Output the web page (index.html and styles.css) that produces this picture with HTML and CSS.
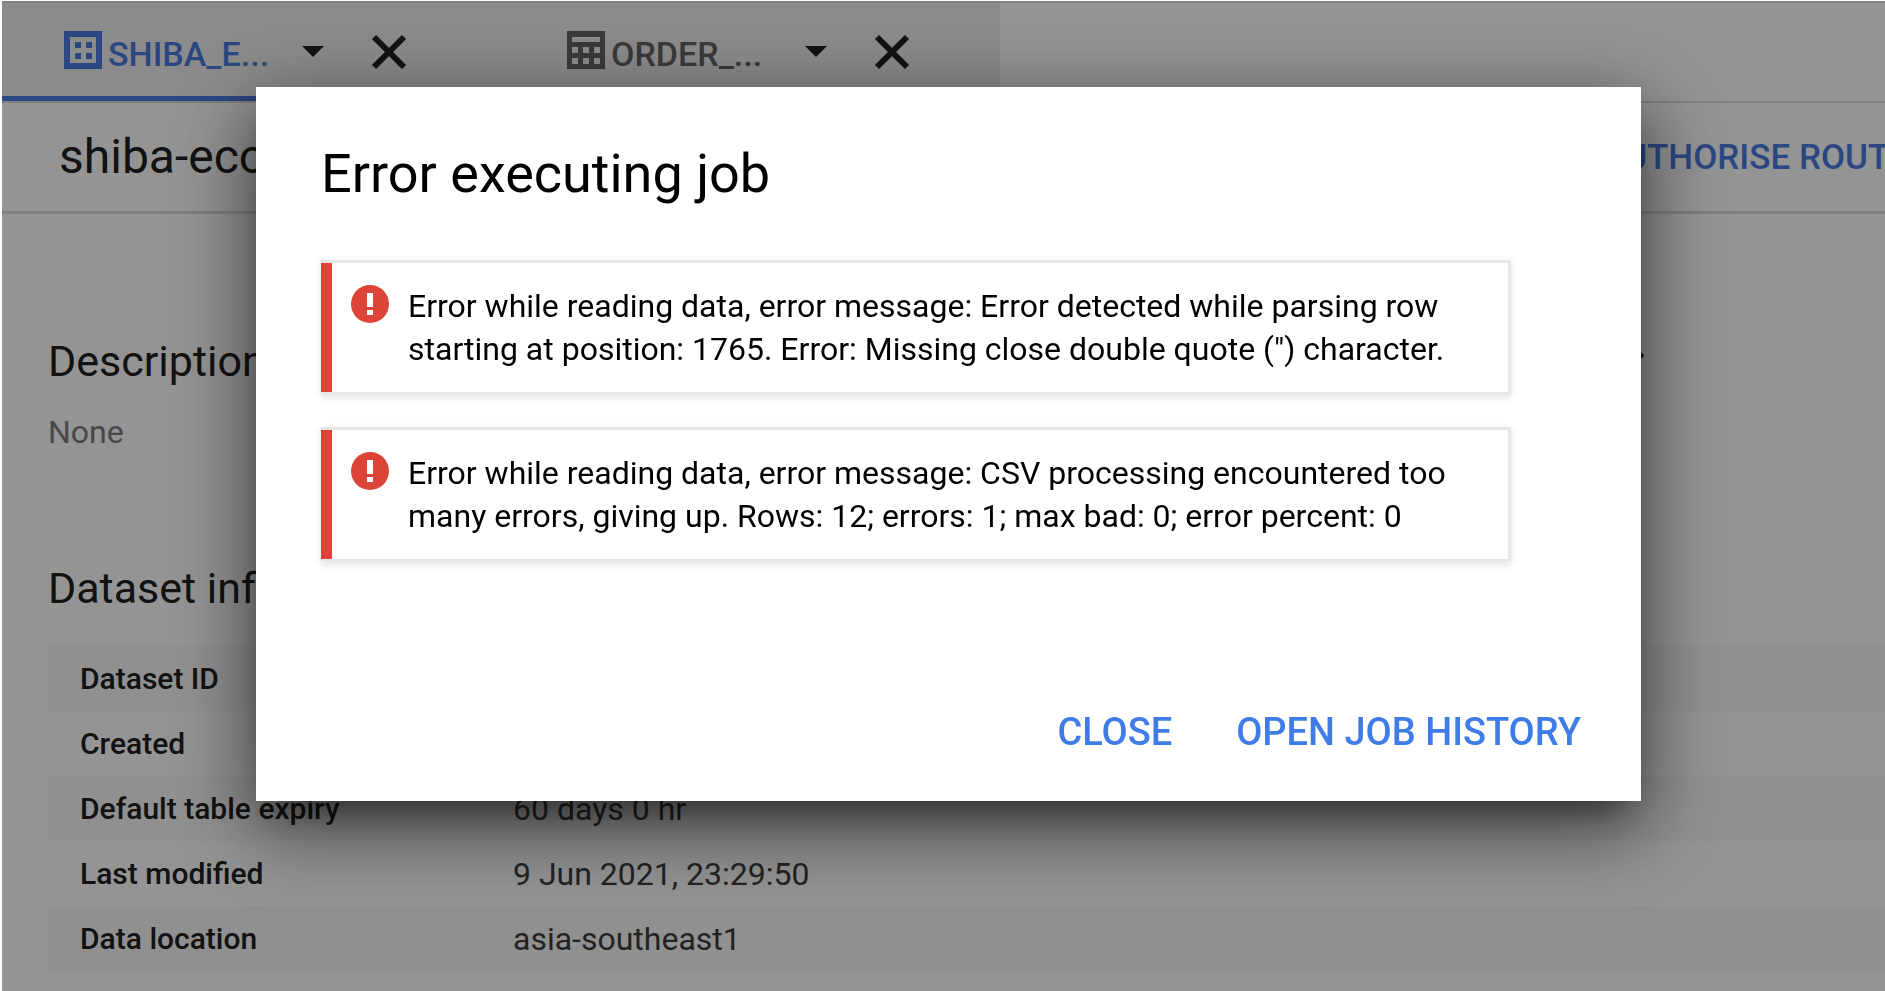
FILE: index.html
```html
<!DOCTYPE html>
<html lang="en-GB">
<head>
<meta charset="utf-8">
<title>Dataset details</title>
<link rel="stylesheet" href="styles.css">
</head>
<body>
<div class="page">
  <nav class="tabbar" aria-label="Open tabs">
    <div class="tabs">
      <div class="tab tab-active">
        <a class="tab-link" href="#dataset">
          <svg class="tab-icon" viewBox="0 0 38 38" aria-hidden="true"><path fill="currentColor" fill-rule="evenodd" d="M0 0h38v38H0zM6 6v26h26V6zM11 11h6v6h-6zM22 11h6v6h-6zM11 22h6v6h-6zM22 22h6v6h-6z"/></svg>
          <span class="tab-name">SHIBA_E...</span>
        </a>
        <button class="icon-button caret" aria-label="Tab menu"><svg width="22" height="11" viewBox="0 0 22 11"><path fill="currentColor" d="M0 0h22L11 11z"/></svg></button>
        <button class="icon-button" aria-label="Close tab"><svg width="36" height="36" viewBox="0 0 36 36"><path stroke="currentColor" stroke-width="6" d="M3 3l30 30M33 3L3 33"/></svg></button>
      </div>
      <div class="tab">
        <a class="tab-link" href="#table">
          <svg class="tab-icon" viewBox="0 0 38 38" aria-hidden="true"><path fill="currentColor" fill-rule="evenodd" d="M0 0h38v38H0zM5 6v5h28V6zM5 16v6h6v-6zM16 16v6h6v-6zM27 16v6h6v-6zM5 27v6h6v-6zM16 27v6h6v-6zM27 27v6h6v-6z"/></svg>
          <span class="tab-name">ORDER_...</span>
        </a>
        <button class="icon-button caret" aria-label="Tab menu"><svg width="22" height="11" viewBox="0 0 22 11"><path fill="currentColor" d="M0 0h22L11 11z"/></svg></button>
        <button class="icon-button" aria-label="Close tab"><svg width="36" height="36" viewBox="0 0 36 36"><path stroke="currentColor" stroke-width="6" d="M3 3l30 30M33 3L3 33"/></svg></button>
      </div>
    </div>
  </nav>
  <header class="header">
    <h1 class="project">shiba-eco</h1>
    <button class="action">AUTHORISE ROUTINES</button>
  </header>
  <main class="content">
    <div class="split">
      <section>
        <h2 class="heading">Description</h2>
        <p class="none">None</p>
      </section>
      <svg class="pencil" viewBox="0 0 36 36" aria-hidden="true"><path d="M0 28v8h8l21-21-8-8zM35 9c1-1 1-2 0-3l-5-5c-1-1-2-1-3 0l-4 4 8 8z"/></svg>
    </div>
    <h2 class="heading">Dataset info</h2>
    <table class="info">
      <tbody>
        <tr><th scope="row">Dataset ID</th><td></td></tr>
        <tr><th scope="row">Created</th><td></td></tr>
        <tr><th scope="row">Default table expiry</th><td>60 days 0 hr</td></tr>
        <tr><th scope="row">Last modified</th><td>9 Jun 2021, 23:29:50</td></tr>
        <tr><th scope="row">Data location</th><td>asia-southeast1</td></tr>
      </tbody>
    </table>
  </main>
</div>
<div class="backdrop">
  <div class="dialog" role="dialog" aria-modal="true" aria-labelledby="dialog-title">
    <h2 class="dialog-title" id="dialog-title">Error executing job</h2>
    <div class="errors">
      <div class="error">
        <svg class="error-icon" viewBox="0 0 38 38" aria-hidden="true"><circle cx="19" cy="19" r="19" fill="#db4437"/><path fill="#fff" d="M16 8h6v14h-6zM16 25h6v5h-6z"/></svg>
        <p class="error-text">Error while reading data, error message: Error detected while parsing row starting at position: 1765. Error: Missing close double quote (") character.</p>
      </div>
      <div class="error">
        <svg class="error-icon" viewBox="0 0 38 38" aria-hidden="true"><circle cx="19" cy="19" r="19" fill="#db4437"/><path fill="#fff" d="M16 8h6v14h-6zM16 25h6v5h-6z"/></svg>
        <p class="error-text">Error while reading data, error message: CSV processing encountered too many errors, giving up. Rows: 12; errors: 1; max bad: 0; error percent: 0</p>
      </div>
    </div>
    <div class="dialog-actions">
      <button class="dialog-button">CLOSE</button>
      <button class="dialog-button">OPEN JOB HISTORY</button>
    </div>
  </div>
</div>
</body>
</html>
```
FILE: styles.css
```css
* { box-sizing: border-box; }
html, body { height: 100%; }
body {
  margin: 0;
  overflow: hidden;
  background: #fff;
  color: #202020;
  font-family: Roboto, "Liberation Sans", sans-serif;
  font-size: 32px;
}
h1, h2, p { margin: 0; font-weight: 400; }
button {
  border: 0;
  padding: 0;
  background: none;
  color: inherit;
  font: inherit;
  cursor: pointer;
}
svg { display: block; }

.page { padding: 1px 0 0 2px; }
.tabbar {
  display: flex;
  height: 102px;
  border-top: 2px solid #dcdcdc;
  border-bottom: 2px solid #dcdcdc;
}
.tabs { display: flex; background: #f0f0f0; }
.tab {
  display: flex;
  align-items: center;
  width: 495px;
  padding: 4px 90px 0 62px;
  border-bottom: 5px solid transparent;
}
.tab-active { width: 503px; padding-right: 98px; border-bottom-color: #4a7ae0; }
.tab-link {
  display: flex;
  align-items: center;
  gap: 6px;
  flex: 1;
  color: #646464;
  text-decoration: none;
}
.tab-active .tab-link { color: #4a7ae0; }
.tab-icon { width: 38px; height: 38px; margin-bottom: 4px; }
.tab-name { font-size: 34px; font-weight: 500; line-height: 40px; padding-top: 4px; }
.icon-button { color: #202020; }
.caret { margin-right: 47px; }

.header {
  display: flex;
  align-items: center;
  height: 111px;
  padding-left: 57px;
  border-bottom: 3px solid #dcdcdc;
  white-space: nowrap;
}
.project { flex: 1; font-size: 48px; line-height: 56px; }
.action { color: #4a7ae0; font-size: 35px; font-weight: 500; margin-right: -80px; }

.content { padding: 117px 0 0 46px; }
.split { display: flex; justify-content: space-between; padding-right: 241px; margin-bottom: 106px; }
.heading { font-size: 43px; line-height: 60px; }
.none { color: #7c7c7c; line-height: 40px; margin-top: 21px; }
.pencil { width: 36px; height: 36px; margin-top: 17px; fill: #202020; }
.info {
  width: 100%;
  margin-top: 28px;
  border-collapse: collapse;
  line-height: 38px;
}
.info tr { height: 65px; }
.info tr:nth-child(odd) { background: #f9f9f9; }
.info th { width: 433px; padding: 0 0 0 32px; font-size: 30px; font-weight: 500; text-align: left; }
.info td { padding: 0 0 0 32px; color: #3c3c3c; }

.backdrop {
  position: fixed;
  inset: 1px 0 0 2px;
  padding: 86px 244px 0 254px;
  background: rgba(0, 0, 0, 0.42);
}
.dialog {
  padding: 52px 60px 47px 65px;
  background: #fff;
  color: #000;
  box-shadow: 0 22px 30px -14px rgba(0, 0, 0, 0.4), 0 24px 76px 6px rgba(0, 0, 0, 0.54);
}
.dialog-title { font-size: 54px; line-height: 70px; }
.errors { display: grid; gap: 33px; margin: 51px 70px 0 0; }
.error {
  position: relative;
  display: flex;
  gap: 19px;
  padding: 22px 20px 21px 27px;
  border: 3px solid #e7e7e7;
  border-bottom-width: 2px;
  box-shadow: 0 3px 8px rgba(0, 0, 0, 0.12);
}
.error::before {
  content: "";
  position: absolute;
  inset: 0 auto 0 -3px;
  width: 11px;
  background: #db4437;
}
.error-icon { flex: none; width: 38px; height: 38px; }
.error-text { line-height: 43px; }
.dialog-actions { display: flex; justify-content: flex-end; gap: 64px; margin-top: 149px; }
.dialog-button { color: #3f7ce8; font-size: 38px; font-weight: 500; line-height: 44px; }
```
